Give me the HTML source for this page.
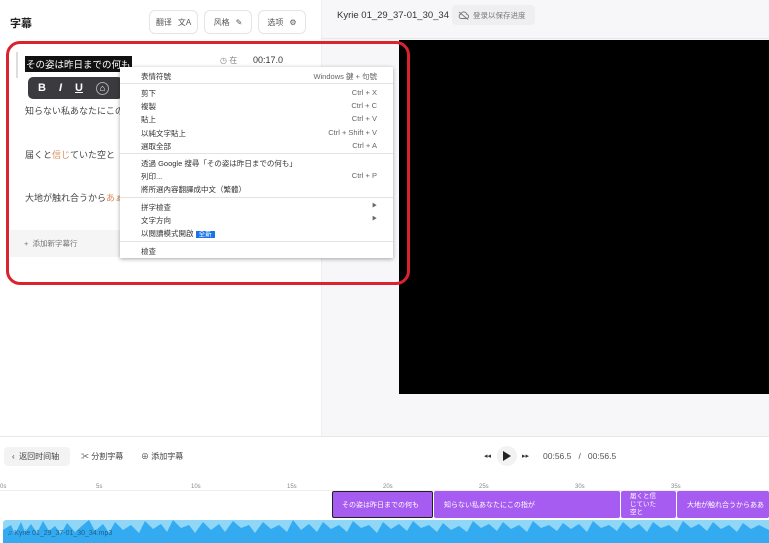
<!DOCTYPE html>
<html><head><meta charset="utf-8"><style>
*{box-sizing:border-box;margin:0;padding:0}
body{width:769px;height:543px;overflow:hidden;position:relative;background:#fff;font-family:"Liberation Sans","Noto Sans CJK JP",sans-serif;color:#333}
.a{position:absolute}
.btn{position:absolute;top:10px;height:24px;border:1px solid #e5e5e5;border-radius:6px;font-size:8px;color:#555;display:flex;align-items:center;justify-content:center;gap:6px;background:#fff}
.menu{position:absolute;left:120px;top:67px;width:273px;height:191px;background:#fff;box-shadow:0 1px 4px rgba(0,0,0,.35);font-size:7.5px;color:#333}
.mi{position:absolute;left:21px;right:16px;display:flex;justify-content:space-between}
.mi span:last-child{color:#666}
.sep{position:absolute;left:0;right:0;height:1px;background:#e3e3e3}
.seg{position:absolute;top:491px;height:27px;background:#a65cf0;color:#fff;font-size:7px;display:flex;align-items:center;border-radius:2px}
.tk{position:absolute;top:484px;font-size:6px;color:#888}
</style></head><body>
<div class="a" style="left:321px;top:0;width:448px;height:436px;background:#f7f7f9;border-left:1px solid #eee"></div>
<div class="a" style="left:321px;top:38px;width:448px;height:1px;background:#e8e8e8"></div>
<div class="a" style="left:399px;top:40px;width:370px;height:354px;background:#000"></div>
<div class="a" style="left:0;top:436px;width:769px;height:1px;background:#e8e8e8"></div>
<div class="a" style="left:337px;top:10px;font-size:9.5px;color:#333">Kyrie 01_29_37-01_30_34</div>
<div class="a" style="left:452px;top:5px;width:83px;height:20px;background:#efeff1;border-radius:4px;font-size:7.5px;color:#777;display:flex;align-items:center;padding-left:6px;gap:4px">
<svg width="11" height="9" viewBox="0 0 11 9"><path d="M3 7.5h5.5a2 2 0 0 0 .3-4A3 3 0 0 0 3 3a2.3 2.3 0 0 0 0 4.5z M1 1l9 7.5" fill="none" stroke="#777" stroke-width=".9"/></svg>登录以保存进度</div>

<div class="a" style="left:10px;top:15px;font-size:11px;font-weight:bold;color:#222">字幕</div>
<div class="btn" style="left:149px;width:49px">翻译 <span>文A</span></div>
<div class="btn" style="left:204px;width:48px">风格 <span>✎</span></div>
<div class="btn" style="left:258px;width:48px">选项 <span>⚙</span></div>

<div class="a" style="left:16px;top:52px;width:2px;height:26px;background:#ddd"></div>
<div class="a" style="left:25px;top:56px;background:#111;color:#fff;font-size:9.5px;padding:1px 1px">その姿は昨日までの何も</div>
<div class="a" style="left:220px;top:55px;font-size:8px;color:#888">◷ 在</div>
<div class="a" style="left:253px;top:55px;font-size:9px;color:#333">00:17.0</div>
<div class="a" style="left:28px;top:77px;width:95px;height:22px;background:#3b3b3f;border-radius:5px;color:#fff;font-size:11px;font-weight:bold;display:flex;align-items:center;gap:13px;padding-left:10px"><span>B</span><i>I</i><u>U</u><span style="font-size:9px;border:1px solid #aaa;border-radius:50%;width:13px;height:13px;display:flex;align-items:center;justify-content:center">⌂</span></div>
<div class="a" style="left:25px;top:104px;font-size:9px;color:#444">知らない私あなたにこの</div>
<div class="a" style="left:25px;top:148px;font-size:9px;color:#444">届くと<span style="color:#d98c5f">信じ</span>ていた空と</div>
<div class="a" style="left:25px;top:191px;font-size:9px;color:#444">大地が触れ合うから<span style="color:#d98c5f">あぁ</span></div>
<div class="a" style="left:10px;top:230px;width:300px;height:27px;background:#f5f5f5"></div>
<div class="a" style="left:24px;top:238px;font-size:7.5px;color:#777">+&nbsp;&nbsp;添加新字幕行</div>

<div class="menu">
<div class="mi" style="top:4px"><span>表情符號</span><span>Windows 鍵 + 句號</span></div>
<div class="sep" style="top:16px"></div>
<div class="mi" style="top:21px"><span>剪下</span><span>Ctrl + X</span></div>
<div class="mi" style="top:34px"><span>複製</span><span>Ctrl + C</span></div>
<div class="mi" style="top:47px"><span>貼上</span><span>Ctrl + V</span></div>
<div class="mi" style="top:61px"><span>以純文字貼上</span><span>Ctrl + Shift + V</span></div>
<div class="mi" style="top:74px"><span>選取全部</span><span>Ctrl + A</span></div>
<div class="sep" style="top:86px"></div>
<div class="mi" style="top:91px"><span>透過 Google 搜尋「その姿は昨日までの何も」</span><span></span></div>
<div class="mi" style="top:104px"><span>列印...</span><span>Ctrl + P</span></div>
<div class="mi" style="top:117px"><span>將所選內容翻譯成中文（繁體）</span><span></span></div>
<div class="sep" style="top:130px"></div>
<div class="mi" style="top:135px"><span>拼字檢查</span><span style="font-size:5px">▶</span></div>
<div class="mi" style="top:148px"><span>文字方向</span><span style="font-size:5px">▶</span></div>
<div class="mi" style="top:161px"><span>以閱讀模式開啟 <b style="background:#1a73e8;color:#fff;font-weight:normal;padding:0 3px;font-size:6.5px">全新</b></span><span></span></div>
<div class="sep" style="top:174px"></div>
<div class="mi" style="top:179px"><span>檢查</span><span></span></div>
</div>

<div class="a" style="left:6px;top:41px;width:404px;height:244px;border:3px solid #d9232d;border-radius:14px"></div>

<div class="a" style="left:4px;top:447px;width:66px;height:19px;background:#f3f3f4;border-radius:4px;font-size:8px;color:#444;display:flex;align-items:center;padding-left:8px">‹&nbsp;&nbsp;返回时间轴</div>
<div class="a" style="left:81px;top:451px;font-size:8px;color:#444">✂ 分割字幕</div>
<div class="a" style="left:141px;top:451px;font-size:8px;color:#444">⊕ 添加字幕</div>
<div class="a" style="left:484px;top:452px;font-size:7px;color:#333">◂◂</div>
<div class="a" style="left:497px;top:446px;width:20px;height:20px;border-radius:50%;background:#f2f2f3"></div>
<div class="a" style="left:503px;top:450px;width:0;height:0;border-left:8px solid #222;border-top:5px solid transparent;border-bottom:5px solid transparent;margin-top:1px"></div>
<div class="a" style="left:522px;top:452px;font-size:7px;color:#333">▸▸</div>
<div class="a" style="left:543px;top:451px;font-size:8.5px;color:#555">00:56.5&nbsp;&nbsp;&nbsp;/&nbsp;&nbsp;&nbsp;00:56.5</div>

<div class="a" style="left:0;top:490px;width:769px;height:1px;background:#eee"></div>
<div class="tk" style="left:0">0s</div><div class="tk" style="left:96px">5s</div><div class="tk" style="left:191px">10s</div><div class="tk" style="left:287px">15s</div><div class="tk" style="left:383px">20s</div><div class="tk" style="left:479px">25s</div><div class="tk" style="left:575px">30s</div><div class="tk" style="left:671px">35s</div>

<div class="seg" style="left:332px;width:101px;border:1.5px solid #222;padding-left:9px">その姿は昨日までの何も</div>
<div class="seg" style="left:434px;width:186px;padding-left:10px">知らない私あなたにこの指が</div>
<div class="seg" style="left:621px;width:55px;padding-left:9px;font-size:6.5px;line-height:8px">届くと信<br>じていた<br>空と</div>
<div class="seg" style="left:677px;width:92px;padding-left:10px;white-space:nowrap;overflow:hidden">大地が触れ合うからああ</div>

<div class="a" style="left:3px;top:520px;width:766px;height:23px;background:#8fd6f7;border-radius:3px 0 0 0;overflow:hidden">
<svg width="766" height="23" viewBox="0 0 766 23" preserveAspectRatio="none">
<g transform="translate(0,-4)">
<path fill="#34aaf0" d="M0 30 L0 14 L8 9 L12 18 L18 6 L22 16 L28 8 L34 17 L40 5 L46 15 L52 10 L58 18 L64 7 L72 16 L80 9 L86 4 L92 15 L100 8 L106 17 L112 6 L120 14 L128 9 L136 17 L142 5 L150 13 L158 8 L164 16 L170 4 L178 12 L186 9 L192 17 L200 6 L208 14 L216 8 L222 16 L230 5 L238 12 L246 9 L252 17 L260 6 L268 13 L276 9 L284 16 L290 4 L298 14 L306 8 L314 16 L320 6 L328 13 L336 9 L344 16 L350 5 L358 12 L366 9 L374 17 L380 6 L388 13 L396 8 L404 15 L410 5 L418 12 L426 9 L434 16 L440 7 L448 14 L456 10 L464 16 L470 5 L478 12 L486 8 L494 15 L500 6 L508 13 L516 9 L524 16 L530 5 L538 12 L546 9 L554 15 L560 7 L568 13 L576 8 L584 16 L590 5 L598 12 L606 9 L614 15 L620 6 L628 13 L636 8 L644 16 L650 6 L658 12 L666 9 L674 16 L680 5 L688 12 L696 8 L704 15 L710 6 L718 13 L726 9 L734 16 L740 7 L748 13 L756 9 L766 14 L766 30 Z"/>
</g>
</svg>
<div class="a" style="left:4px;top:10px;font-size:7px;color:#1d5f8a">♫ Kyrie 01_29_37-01_30_34.mp3</div>
</div>
</body></html>
